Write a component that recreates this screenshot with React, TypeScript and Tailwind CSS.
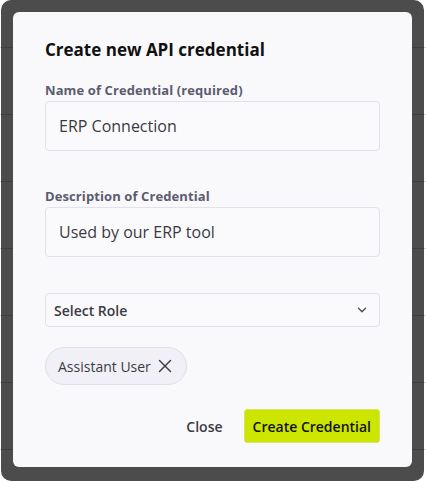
import { ChevronDown, X } from "lucide-react";

const ROWS = ["1/9/2023", "", "", "", "", "", "", "1/10/2023"];

function BackgroundTable() {
  return (
    <div className="flex flex-col -mt-[19px]">
      {ROWS.map((date, i) => (
        <div
          key={i}
          className="h-[67px] shrink-0 border-b border-[#d4d4dc] flex items-start pl-[240px] pt-[26px] text-[14px] text-[#444]"
        >
          {date}
        </div>
      ))}
    </div>
  );
}

export default function App() {
  return (
    <div
      className="relative w-[426px] h-[482px] overflow-hidden bg-white"
      style={{ fontFamily: "'Open Sans', 'Noto Sans', sans-serif" }}
    >
      <BackgroundTable />

      {/* overlay */}
      <div className="absolute left-[1px] top-0 right-[2px] bottom-[1px] rounded-[10px] bg-black/70 flex items-start pl-[12px] pt-[12px]">
        {/* modal */}
        <div className="w-[399px] h-[455px] rounded-[6px] bg-[#f9f9fc] px-8 pt-[26px] flex flex-col">
          <h2 className="text-[17px] font-bold text-[#111] leading-[24px]">Create new API credential</h2>

          <label className="mt-[20px] text-[13px] font-bold text-[#5c5b70] leading-[16px] tracking-[0.1px]">
            Name of Credential (required)
          </label>
          <div className="mt-[3px] h-[50px] rounded-[4px] border border-[#e3e1ee] bg-[#fafafd] flex items-center px-[13px] text-[16px] text-[#3a3a3e]">
            ERP Connection
          </div>

          <label className="mt-[37px] text-[13px] font-bold text-[#5c5b70] leading-[16px] tracking-[0.1px]">
            Description of Credential
          </label>
          <div className="mt-[3px] h-[50px] rounded-[4px] border border-[#e3e1ee] bg-[#fafafd] flex items-center px-[13px] text-[16px] text-[#3a3a3e]">
            Used by our ERP tool
          </div>

          <div className="mt-[36px] h-[34px] rounded-[4px] border border-[#e3e1ee] bg-[#fafafd] flex items-center justify-between pl-[8px] pr-[10px]">
            <span className="text-[14px] font-semibold text-[#3b3a44]">Select Role</span>
            <ChevronDown className="w-[14px] h-[14px] text-[#4a4a52]" strokeWidth={2.25} />
          </div>

          <div className="mt-[20px] self-start h-[38px] rounded-full border border-[#e0deeb] bg-[#f1f0f7] flex items-center gap-[3px] pl-[12px] pr-[10px]">
            <span className="text-[14px] text-[#3b3b44]">Assistant User</span>
            <X className="w-[22px] h-[22px] text-[#3b3b44]" strokeWidth={1.6} />
          </div>

          <div className="mt-[24px] flex items-center justify-end gap-[21px]">
            <button className="text-[14px] font-semibold text-[#3b3b44]">Close</button>
            <button className="h-[34px] px-[8px] rounded-[3px] border border-[#d9e46a] bg-[#cde600] text-[14px] font-semibold text-[#111]">
              Create Credential
            </button>
          </div>
        </div>
      </div>
    </div>
  );
}
